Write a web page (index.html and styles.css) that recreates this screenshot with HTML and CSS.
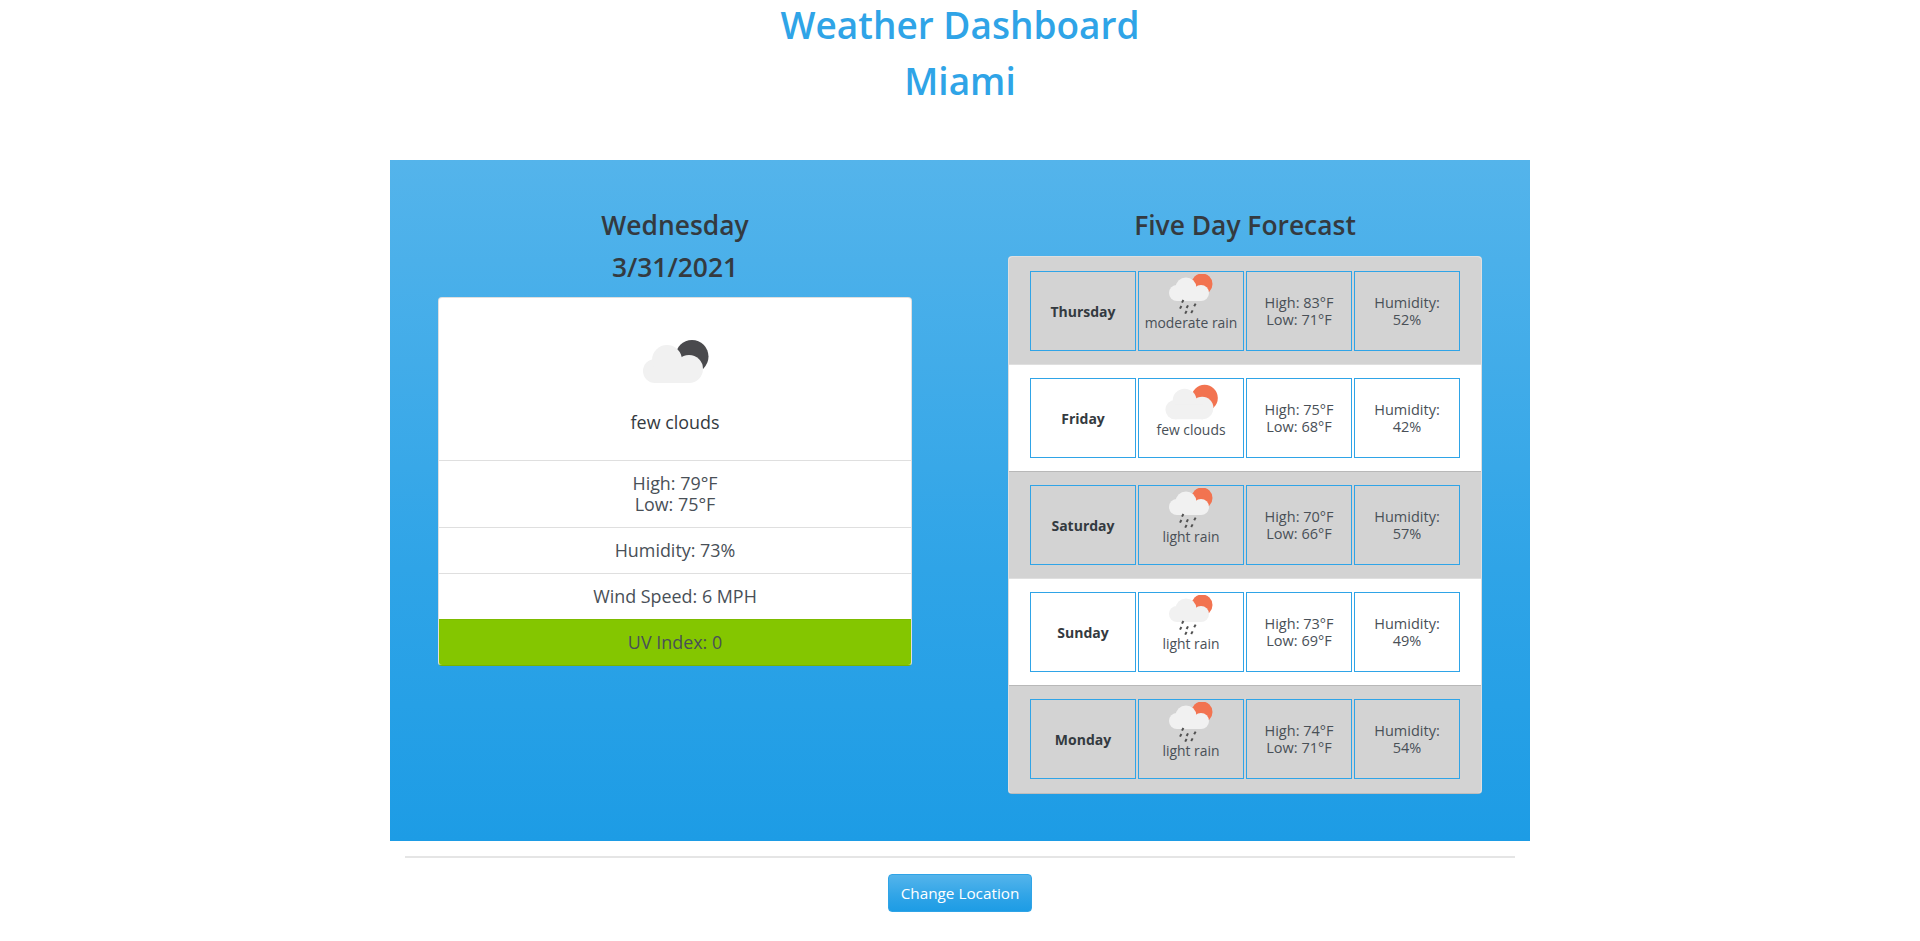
FILE: index.html
```html
<!DOCTYPE html>
<html lang="en">
<head>
    <meta charset="UTF-8">
    <title>Weather Dashboard</title>
    <link rel="stylesheet" href="styles.css">
</head>
<body>
<svg class="defs" width="0" height="0">
    <symbol id="clouds" viewBox="20 18 70 47">
        <circle class="sun" cx="72" cy="36.5" r="16.5"/>
        <g class="cloud">
            <circle cx="35" cy="51" r="12"/>
            <circle cx="47" cy="40" r="15"/>
            <circle cx="69" cy="49" r="14"/>
            <rect x="35" y="45" width="35" height="18"/>
        </g>
    </symbol>
    <symbol id="rain" viewBox="38 10 46 40">
        <circle class="sun" cx="72" cy="20" r="10.5"/>
        <g class="cloud">
            <circle cx="47" cy="29" r="8"/>
            <circle cx="56" cy="24" r="10.5"/>
            <circle cx="71" cy="29" r="8"/>
            <rect x="47" y="25" width="24" height="12"/>
        </g>
        <g class="drops">
            <path d="M53.4 36 52 38.6"/>
            <path d="M51.4 42 50 44.6"/>
            <path d="M58 41.4 56.6 44"/>
            <path d="M56.6 47 55.2 49.6"/>
            <path d="M65.6 39.6 64.2 42.2"/>
            <path d="M62.6 46.4 61.2 49"/>
        </g>
    </symbol>
</svg>

<div class="titles">
    <h1>Weather Dashboard</h1>
    <h1>Miami</h1>
</div>

<div class="container">
    <div class="panel">
        <div class="col">
            <h3>Wednesday</h3>
            <h3>3/31/2021</h3>
            <div class="card today">
                <div class="today-head">
                    <svg class="icon-big moon"><use href="#clouds"/></svg>
                    <p>few clouds</p>
                </div>
                <div class="today-item">High: 79°F<br>Low: 75°F</div>
                <div class="today-item">Humidity: 73%</div>
                <div class="today-item">Wind Speed: 6 MPH</div>
                <div class="today-item uv">UV Index: 0</div>
            </div>
        </div>
        <div class="col">
            <h3>Five Day Forecast</h3>
            <div class="card forecast">
                <div class="day">
                    <div class="cell name">Thursday</div>
                    <div class="cell pic">
                        <div class="pic-box"><svg class="icon-rain"><use href="#rain"/></svg></div>
                        moderate rain
                    </div>
                    <div class="cell">High: 83°F<br>Low: 71°F</div>
                    <div class="cell">Humidity:<br>52%</div>
                </div>
                <div class="day">
                    <div class="cell name">Friday</div>
                    <div class="cell pic">
                        <div class="pic-box"><svg class="icon-small"><use href="#clouds"/></svg></div>
                        few clouds
                    </div>
                    <div class="cell">High: 75°F<br>Low: 68°F</div>
                    <div class="cell">Humidity:<br>42%</div>
                </div>
                <div class="day">
                    <div class="cell name">Saturday</div>
                    <div class="cell pic">
                        <div class="pic-box"><svg class="icon-rain"><use href="#rain"/></svg></div>
                        light rain
                    </div>
                    <div class="cell">High: 70°F<br>Low: 66°F</div>
                    <div class="cell">Humidity:<br>57%</div>
                </div>
                <div class="day">
                    <div class="cell name">Sunday</div>
                    <div class="cell pic">
                        <div class="pic-box"><svg class="icon-rain"><use href="#rain"/></svg></div>
                        light rain
                    </div>
                    <div class="cell">High: 73°F<br>Low: 69°F</div>
                    <div class="cell">Humidity:<br>49%</div>
                </div>
                <div class="day">
                    <div class="cell name">Monday</div>
                    <div class="cell pic">
                        <div class="pic-box"><svg class="icon-rain"><use href="#rain"/></svg></div>
                        light rain
                    </div>
                    <div class="cell">High: 74°F<br>Low: 71°F</div>
                    <div class="cell">Humidity:<br>54%</div>
                </div>
            </div>
        </div>
    </div>
    <hr>
    <div class="actions">
        <button class="btn" type="button">Change Location</button>
    </div>
</div>
</body>
</html>
```

FILE: styles.css
```css
* {
    margin: 0;
    padding: 0;
    box-sizing: border-box;
}

body {
    font-family: "Open Sans", "Noto Sans", "Liberation Sans", sans-serif;
    font-size: 16px;
    color: #495057;
    background-color: #fff;
}

.defs {
    display: block;
    height: 0;
}

h1 {
    font-size: 37px;
    font-weight: 600;
    line-height: 48px;
    margin-bottom: 8px;
    color: #2fa4e7;
    text-align: center;
}

.titles {
    padding-top: 1px;
    margin-bottom: 55px;
}

.container {
    width: 1140px;
    margin: 0 auto;
}

.panel {
    display: flex;
    padding: 49px 48px 47px;
    gap: 96px;
    background-image: linear-gradient(#54b4eb, #2fa4e7 60%, #1d9ce5);
}

.col {
    width: 474px;
}

h3 {
    font-size: 26.4px;
    font-weight: 600;
    line-height: 33.6px;
    margin-bottom: 8px;
    color: #343a40;
    text-align: center;
}

.card {
    margin-top: 13px;
    border: 1px solid rgba(0, 0, 0, .125);
    border-radius: 4px;
    background-color: #fff;
    overflow: hidden;
    text-align: center;
}

.today {
    border-bottom-color: #76b200;
}

.forecast {
    border-bottom-color: #bdbdbd;
}

.today-head {
    height: 162px;
    padding-top: 40px;
}

.icon-big {
    display: block;
    width: 70px;
    height: 47px;
    margin: 0 auto;
}

.today-head p {
    margin-top: 25px;
    font-size: 17.9px;
    line-height: 24px;
    color: #343a40;
}

.today-item {
    padding: 12px 20px;
    border-top: 1px solid rgba(0, 0, 0, .125);
    font-size: 17.9px;
    line-height: 21px;
}

.uv {
    background-color: #84c600;
    border-top-color: rgba(0, 0, 0, .05);
}

.day {
    display: flex;
    justify-content: center;
    padding: 12px 20px;
    border-top: 1px solid rgba(0, 0, 0, .125);
    font-size: 14.5px;
    line-height: 17px;
}

.day:first-child {
    border-top: 0;
    padding-top: 13px;
}

.day:last-child {
    padding-bottom: 13px;
}

.day:nth-child(odd) {
    background-color: #d3d3d3;
}

.cell {
    display: flex;
    flex-direction: column;
    justify-content: center;
    width: 106px;
    height: 80px;
    margin: 1px;
    border: 1px solid #2fa4e7;
    text-align: center;
}

.name {
    padding-top: 2px;
    font-size: 14px;
    font-weight: 700;
    color: #343a40;
}

.pic {
    justify-content: flex-start;
    align-items: center;
    padding-top: 2px;
    font-size: 13.9px;
    white-space: nowrap;
}

.pic-box {
    display: flex;
    align-items: flex-end;
    height: 40px;
}

.icon-rain {
    display: block;
    width: 46px;
    height: 40px;
}

.icon-small {
    display: block;
    width: 56px;
    height: 38px;
}

.sun {
    fill: var(--sun-color, #f27350);
}

.moon {
    --sun-color: #4a4a4d;
}

hr {
    margin: 15px 15px 16px;
    border: 0;
    border-top: 2px solid rgba(0, 0, 0, .1);
}

.actions {
    text-align: center;
}

.btn {
    width: 144px;
    height: 38px;
    border: 1px solid #2fa4e7;
    border-radius: 4px;
    font-family: inherit;
    font-size: 15.3px;
    color: #fff;
    background-image: linear-gradient(#54b4eb, #2fa4e7 60%, #1d9ce5);
}

.cloud circle,
.cloud rect {
    fill: #f1f1f1;
}

.drops path {
    fill: none;
    stroke: #505050;
    stroke-width: 2;
}
```
